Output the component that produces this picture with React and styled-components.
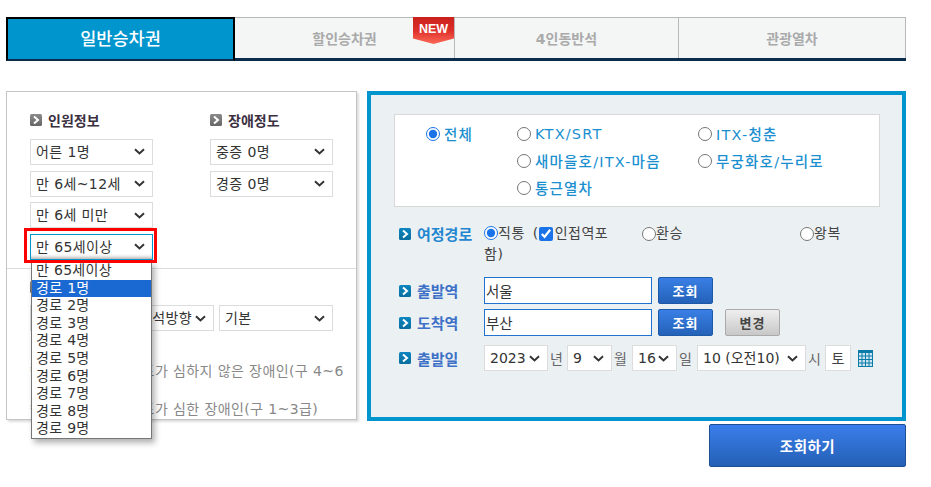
import React from 'react';
import styled, { createGlobalStyle } from 'styled-components';

const FONT = '"DejaVu Sans", "Noto Sans CJK KR", sans-serif';
const CHEVRON = `url("data:image/svg+xml,%3Csvg xmlns='http://www.w3.org/2000/svg' width='11' height='7' viewBox='0 0 11 7'%3E%3Cpath d='M1 1.2 L5.5 5.4 L10 1.2' fill='none' stroke='%23333' stroke-width='2'/%3E%3C/svg%3E")`;

const Global = createGlobalStyle`
  html, body { margin: 0; padding: 0; background: #fff; }
  body { font-family: ${FONT}; font-size: 14px; color: #333; }
  * { box-sizing: border-box; }
`;

const Page = styled.div`
  width: 931px;
  height: 487px;
  padding: 17px 25px 0 6px;
  overflow: hidden;
`;

const TabBar = styled.div`
  display: flex;
  height: 44px;
  border-bottom: 3px solid #0b2c4a;
  position: relative;
`;

const Tab = styled.div`
  width: ${p => p.$w}px;
  height: ${p => (p.$active ? 44 : 41)}px;
  padding-bottom: ${p => (p.$active ? 3 : 1)}px;
  display: flex;
  align-items: center;
  justify-content: center;
  position: relative;
  font-weight: ${p => (p.$active ? 500 : 700)};
  font-size: ${p => (p.$active ? 17.5 : 14)}px;
  color: ${p => (p.$active ? '#fff' : '#aaa')};
  background: ${p => (p.$active ? '#0095cd' : '#f4f6f6')};
  border: ${p => (p.$active ? '2px solid #000' : '1px solid #b8b8b8')};
  border-left-width: ${p => (p.$active ? 2 : 0)}px;
  border-bottom: ${p => (p.$active ? '2px solid #0b2c4a' : 'none')};
  z-index: ${p => (p.$active ? 1 : 0)};
`;

const NewBadge = styled.div`
  position: absolute;
  top: -1px;
  right: 0;
  width: 41px;
  height: 27px;
  padding-top: 5px;
  text-align: center;
  font: 700 12.5px "Liberation Sans", sans-serif;
  color: #fff;
  background: linear-gradient(#c9201c 0%, #de2f2a 50%, #fb6a58 100%);
  clip-path: polygon(0 0, 100% 0, 100% 80%, 50% 100%, 0 80%);
`;

const Body = styled.div`
  display: flex;
  gap: 10px;
  margin-top: 30px;
  align-items: flex-start;
`;

const LeftPanel = styled.div`
  position: relative;
  width: 351px;
  height: 329px;
  background: #fff;
  border: 1px solid #c4c4c4;
  box-shadow: 2px 2px 2px #ddd;
`;

const TopSection = styled.div`
  display: flex;
  align-items: flex-start;
  gap: 57px;
  padding: 20px 0 0 23px;
  height: 177px;
  border-bottom: 1px solid #dcdcdc;
`;

const Column = styled.div`
  width: 123px;
  display: flex;
  flex-direction: column;
  gap: 5.67px;
  position: relative;
`;

const SectionTitle = styled.div`
  display: flex;
  align-items: center;
  gap: 6px;
  height: 16px;
  margin-bottom: ${p => p.$mb ?? 5.3}px;
  font-size: 14px;
  font-weight: 700;
  color: #3b3040;
`;

const Select = styled.select`
  appearance: none;
  height: 26px;
  width: ${p => p.$w || 123}px;
  padding: 0 0 0 ${p => p.$pl ?? 5}px;
  font: 14px ${FONT};
  letter-spacing: ${p => p.$ls ?? 0.4}px;
  color: #333;
  background: #fff ${CHEVRON} no-repeat right 7px center;
  border: 1px solid ${p => (p.$focus ? '#0095cd' : '#dcdcdc')};
  border-radius: 0;
  flex: none;
  box-shadow: ${p => (p.$focus ? 'inset 0 -4px 4px -3px #999' : 'none')};
`;

const Highlight = styled.div`
  position: absolute;
  left: -6px;
  bottom: -3px;
  width: 133px;
  height: 35px;
  border: 3px solid #f00;
  pointer-events: none;
  z-index: 3;
`;

const DropList = styled.ul`
  position: absolute;
  left: 24px;
  top: 169px;
  width: 121px;
  margin: 0;
  padding: 0;
  list-style: none;
  background: #fff;
  border: 1px solid #767676;
  box-shadow: 3px 4px 6px rgba(0, 0, 0, 0.3);
  z-index: 2;
`;

const DropItem = styled.li`
  height: 17.6px;
  line-height: 16px;
  padding-left: 4px;
  font-size: 14px;
  letter-spacing: 0.3px;
  color: ${p => (p.$sel ? '#fff' : '#333')};
  background: ${p => (p.$sel ? '#1a69d2' : 'transparent')};
`;

const LowerSection = styled.div`
  padding: 10px 0 0 23px;
`;

const LowerSelects = styled.div`
  display: flex;
  gap: 5px;
  margin-top: 10px;
`;

const Note = styled.p`
  margin: 0;
  padding-right: 6px;
  font-size: 14px;
  line-height: 19px;
  letter-spacing: 0.4px;
  color: #888;
  white-space: nowrap;
  overflow: hidden;
  &:first-of-type { margin-top: 31px; }
  & + & { margin-top: 19px; }
`;

const RightPanel = styled.div`
  width: 539px;
  height: 330px;
  padding: 19px 22px 0 23px;
  background: #ebf0f3;
  border: 4px solid #0095cd;
`;

const TrainBox = styled.div`
  height: 93px;
  padding: 5px 0 0 31px;
  background: #fff;
  border: 1px solid #d8d8d8;
  display: grid;
  grid-template-columns: 91px 181px 1fr;
  grid-auto-rows: 27px;
`;

const Option = styled.label`
  display: flex;
  align-items: center;
  gap: 4px;
  font-size: 14.5px;
  font-weight: 500;
  letter-spacing: 1.2px;
  color: #1a8fd0;
  grid-column: ${p => p.$col || 'auto'};
  white-space: nowrap;
`;

const Radio = styled.input.attrs({ type: 'radio', readOnly: true })`
  width: 14px;
  height: 14px;
  margin: 0;
  flex: none;
  accent-color: #1a73e8;
`;

const FormRow = styled.div`
  display: flex;
  align-items: ${p => p.$align || 'center'};
  margin-top: ${p => p.$mt || 0}px;
`;

const Label = styled.div`
  width: 90px;
  padding-left: 5px;
  flex: none;
  display: flex;
  align-items: center;
  gap: 6px;
  font-size: 15px;
  font-weight: 700;
  color: ${p => p.$c || '#3d70c6'};
`;

const TripGrid = styled.div`
  display: grid;
  grid-template-columns: 158px 158px 1fr;
  height: 42px;
  font-size: 14px;
  line-height: 21px;
  letter-spacing: 0.5px;
  color: #444;
`;

const TripCell = styled.div`
  height: 21px;
  display: flex;
  align-items: center;
  white-space: nowrap;
`;

const DirectCell = styled.div`
  width: 130px;
  line-height: 21px;
  word-spacing: 3px;
`;

const InlineRadio = styled(Radio)`
  vertical-align: -2px;
`;

const Check = styled.input.attrs({ type: 'checkbox', readOnly: true })`
  width: 14px;
  height: 14px;
  margin: 0 2px 0 0;
  vertical-align: -3px;
  accent-color: #1a73e8;
`;

const TextInput = styled.input`
  width: 168px;
  height: 27px;
  padding: 0 1px;
  font: 14.5px ${FONT};
  color: #333;
  background: #fff;
  border: 1px solid #2272cf;
  border-radius: 0;
  flex: none;
`;

const BlueButton = styled.button`
  width: 55px;
  height: 27px;
  margin-left: 6px;
  padding: 0;
  font: 700 13px ${FONT};
  letter-spacing: 1px;
  color: #fff;
  background: linear-gradient(#3a7fe6, #2462b8);
  border: 1px solid #1c5aa8;
  border-radius: 2px;
  flex: none;
`;

const GrayButton = styled.button`
  width: 55px;
  height: 27px;
  margin-left: 12px;
  padding: 0;
  font: 700 13px ${FONT};
  letter-spacing: 1px;
  color: #444;
  background: linear-gradient(#eee, #c8c8c8);
  border: 1px solid #aaa;
  border-radius: 2px;
  flex: none;
`;

const DateRow = styled.div`
  display: flex;
  align-items: center;
  gap: 1px;
  font-size: 14px;
  color: #666;
`;

const DateUnit = styled.span`
  width: ${p => p.$w}px;
  flex: none;
  text-align: left;
  padding-left: 1px;
`;

const DayBox = styled.div`
  width: 26px;
  height: 26px;
  display: flex;
  align-items: center;
  justify-content: center;
  background: #fff;
  border: 1px solid #dcdcdc;
  font-size: 14px;
  color: #444;
  flex: none;
  margin-left: 3px;
`;

const CalendarWrap = styled.span`
  display: flex;
  margin-left: 6px;
`;

const SearchWrap = styled.div`
  display: flex;
  justify-content: flex-end;
  margin-top: 3px;
`;

const SearchButton = styled.button`
  width: 197px;
  height: 43px;
  padding: 0;
  font: 700 14.5px ${FONT};
  letter-spacing: 0.5px;
  color: #fff;
  background: linear-gradient(#3a7eea, #2560b6);
  border: 1px solid #1d4f96;
  border-radius: 2px;
`;

const Bullet = ({ gray }) => (
  <svg width="12" height="12" viewBox="0 0 12 12" style={{ flex: 'none' }}>
    <defs>
      <linearGradient id={gray ? 'bg' : 'bb'} x1="0" y1="0" x2="0" y2="1">
        <stop offset="0" stopColor={gray ? '#8a8a8a' : '#0d86c0'} />
        <stop offset="1" stopColor={gray ? '#666' : '#0a6e9e'} />
      </linearGradient>
    </defs>
    <rect width="12" height="12" rx="1.5" fill={`url(#${gray ? 'bg' : 'bb'})`} />
    <path d="M4 2.5 L8 6 L4 9.5" fill="none" stroke="#fff" strokeWidth="2" />
  </svg>
);

const CalendarIcon = () => (
  <svg width="15" height="17" viewBox="0 0 15 17">
    <rect width="15" height="17" fill="#0a7aa8" />
    <g fill="#cfe6f2">
      {[3, 6.5, 10, 13.5].map(y =>
        [1, 4.5, 8, 11.5].map(x => <rect key={`${x}-${y}`} x={x} y={y} width="2.5" height="2.5" />)
      )}
    </g>
  </svg>
);

const opts = (label) => <option>{label}</option>;

export default function App() {
  return (
    <Page>
      <Global />
      <TabBar>
        <Tab $active $w={229}>일반승차권</Tab>
        <Tab $w={220}>
          할인승차권
          <NewBadge>NEW</NewBadge>
        </Tab>
        <Tab $w={224}>4인동반석</Tab>
        <Tab $w={227}>관광열차</Tab>
      </TabBar>
      <Body>
        <LeftPanel>
          <TopSection>
            <Column>
              <SectionTitle><Bullet gray />인원정보</SectionTitle>
              <Select>{opts('어른 1명')}</Select>
              <Select>{opts('만 6세~12세')}</Select>
              <Select>{opts('만 6세 미만')}</Select>
              <Select $focus>{opts('만 65세이상')}</Select>
              <Highlight />
            </Column>
            <Column>
              <SectionTitle><Bullet gray />장애정도</SectionTitle>
              <Select>{opts('중증 0명')}</Select>
              <Select>{opts('경증 0명')}</Select>
            </Column>
          </TopSection>
          <DropList>
            <DropItem>만 65세이상</DropItem>
            {[1, 2, 3, 4, 5, 6, 7, 8, 9].map(n => (
              <DropItem key={n} $sel={n === 1}>경로 {n}명</DropItem>
            ))}
          </DropList>
          <LowerSection>
            <SectionTitle $mb={0}><Bullet gray />좌석선택</SectionTitle>
            <LowerSelects>
              <Select $w={184} $pl={108}>{opts('좌석방향')}</Select>
              <Select $w={114}>{opts('기본')}</Select>
            </LowerSelects>
            <Note>* 경증 : 장애의 정도가 심하지 않은 장애인(구 4~6</Note>
            <Note>* 중증 : 장애의 정도가 심한 장애인(구 1~3급)</Note>
          </LowerSection>
        </LeftPanel>
        <div>
          <RightPanel>
            <TrainBox>
              <Option><Radio name="train" defaultChecked />전체</Option>
              <Option><Radio name="train" />KTX/SRT</Option>
              <Option><Radio name="train" />ITX-청춘</Option>
              <Option $col="2"><Radio name="train" />새마을호/ITX-마음</Option>
              <Option><Radio name="train" />무궁화호/누리로</Option>
              <Option $col="2"><Radio name="train" />통근열차</Option>
            </TrainBox>
            <FormRow $align="flex-start" $mt={16}>
              <Label $c="#1f86cf"><Bullet />여정경로</Label>
              <TripGrid>
                <DirectCell>
                  <InlineRadio name="trip" defaultChecked />직통 (<Check defaultChecked />인접역포함)
                </DirectCell>
                <TripCell><Radio name="trip" />환승</TripCell>
                <TripCell><Radio name="trip" />왕복</TripCell>
              </TripGrid>
            </FormRow>
            <FormRow $mt={12}>
              <Label><Bullet />출발역</Label>
              <TextInput defaultValue="서울" />
              <BlueButton>조회</BlueButton>
            </FormRow>
            <FormRow $mt={5}>
              <Label><Bullet />도착역</Label>
              <TextInput defaultValue="부산" />
              <BlueButton>조회</BlueButton>
              <GrayButton>변경</GrayButton>
            </FormRow>
            <FormRow $mt={9}>
              <Label><Bullet />출발일</Label>
              <DateRow>
                <Select $w={64} $ls={0}>{opts('2023')}</Select>
                <DateUnit $w={17}>년</DateUnit>
                <Select $w={45} $ls={0}>{opts('9')}</Select>
                <DateUnit $w={18}>월</DateUnit>
                <Select $w={45} $ls={0}>{opts('16')}</Select>
                <DateUnit $w={18}>일</DateUnit>
                <Select $w={109} $ls={0}>{opts('10 (오전10)')}</Select>
                <DateUnit $w={14}>시</DateUnit>
                <DayBox>토</DayBox>
                <CalendarWrap><CalendarIcon /></CalendarWrap>
              </DateRow>
            </FormRow>
          </RightPanel>
          <SearchWrap>
            <SearchButton>조회하기</SearchButton>
          </SearchWrap>
        </div>
      </Body>
    </Page>
  );
}
